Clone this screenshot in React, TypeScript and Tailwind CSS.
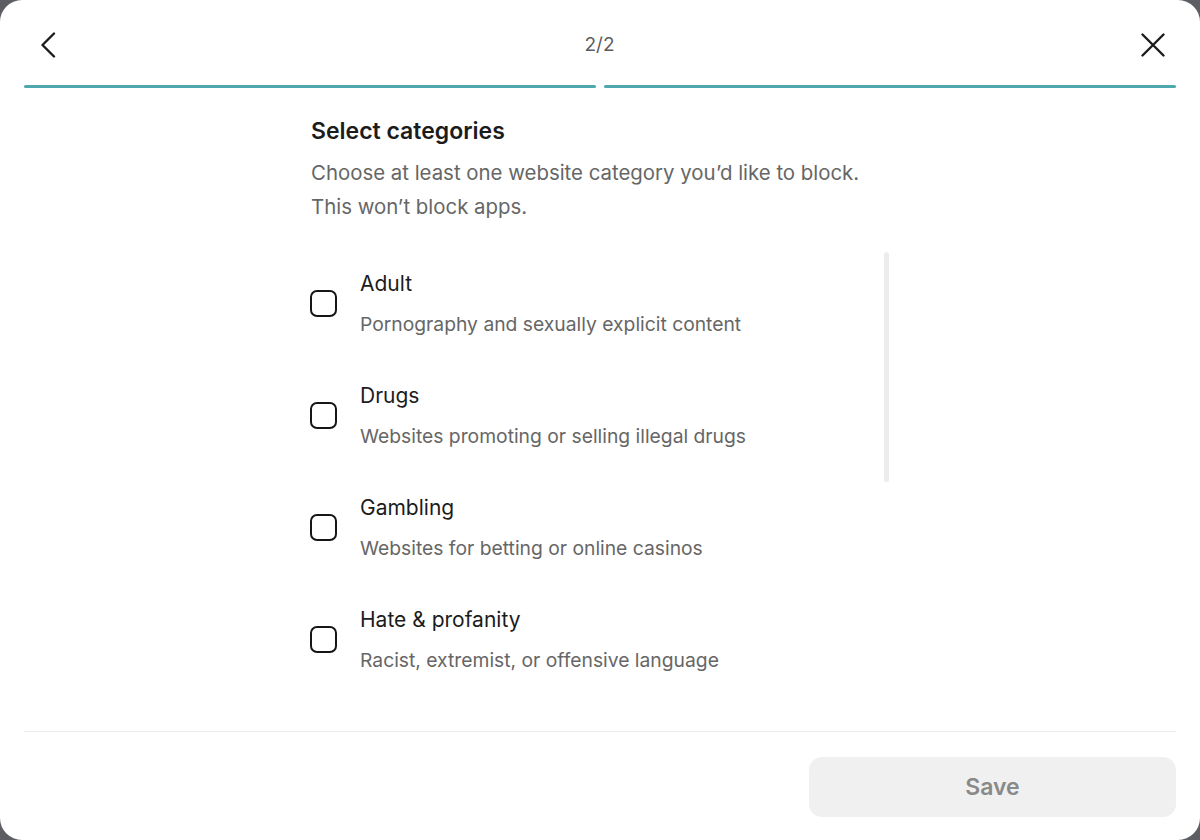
import React from 'react';

const categories = [
  { title: 'Adult', desc: 'Pornography and sexually explicit content' },
  { title: 'Drugs', desc: 'Websites promoting or selling illegal drugs' },
  { title: 'Gambling', desc: 'Websites for betting or online casinos' },
  { title: 'Hate & profanity', desc: 'Racist, extremist, or offensive language' },
];

function CategoryRow({ title, desc }: { title: string; desc: string }) {
  return (
    <label className="flex h-[112px] shrink-0 cursor-pointer items-start">
      <div className="flex items-center gap-[23px]">
        <span className="-ml-px block h-[27px] w-[27px] shrink-0 rounded-[7px] border-[2.5px] border-[#161616]" />
        <div className="flex flex-col">
          <span className="text-[21px] leading-[28px] text-[#1c1c1c]">{title}</span>
          <span className="mt-[13px] text-[19.3px] leading-[26px] text-[#666666]">{desc}</span>
        </div>
      </div>
    </label>
  );
}

export default function App() {
  return (
    <div className="h-[840px] w-[1200px] bg-[#5d5e63]" style={{ fontFamily: 'Inter, "Noto Sans", sans-serif' }}>
      <div className="flex h-full w-full flex-col rounded-[22px] bg-white px-6">
        {/* header */}
        <div className="flex h-[85px] items-center justify-between pt-[5px]">
          <button className="flex h-10 w-10 items-center justify-start pl-[17px] -ml-[1px]">
            <svg width="16" height="26" viewBox="0 0 16 26" fill="none">
              <path d="M14 1.5L2.5 13L14 24.5" stroke="#1c1c1c" strokeWidth="2.4" strokeLinecap="round" strokeLinejoin="round" />
            </svg>
          </button>
          <span className="text-[19px] text-[#5c5c5c]">2/2</span>
          <button className="flex h-10 w-10 items-center justify-end pr-[11px]">
            <svg width="24" height="24" viewBox="0 0 24 24" fill="none">
              <path d="M1.5 1.5L22.5 22.5M22.5 1.5L1.5 22.5" stroke="#1c1c1c" strokeWidth="2.4" strokeLinecap="round" />
            </svg>
          </button>
        </div>

        {/* progress */}
        <div className="flex gap-2">
          <div className="h-[3px] flex-1 rounded-full bg-[#4fa8ad]" />
          <div className="h-[3px] flex-1 rounded-full bg-[#4fa8ad]" />
        </div>

        {/* content */}
        <div className="mx-auto flex w-[578px] flex-col">
          <h1 className="mt-7 text-[23px] font-semibold leading-[30px] text-[#1c1c1c]">Select categories</h1>
          <p className="mt-[10px] text-[20.4px] leading-[34px] text-[#666666]">
            Choose at least one website category you’d like to block.
            <br />
            This won’t block apps.
          </p>

          <div className="mt-[28px] flex h-[468px]">
            <div className="flex flex-1 flex-col pt-[18px]">
              {categories.map((c) => (
                <CategoryRow key={c.title} title={c.title} desc={c.desc} />
              ))}
            </div>
            <div className="w-[5px] shrink-0">
              <div className="h-[230px] w-[5px] rounded-full bg-[#ececec]" />
            </div>
          </div>
        </div>

        {/* footer */}
        <div className="mt-[11px] h-px bg-[#ececec]" />
        <div className="mt-[25px] flex justify-end">
          <button className="h-[60px] w-[367px] rounded-[13px] bg-[#f0f0f0] text-[23px] font-semibold text-[#898989]">
            Save
          </button>
        </div>
      </div>
    </div>
  );
}
